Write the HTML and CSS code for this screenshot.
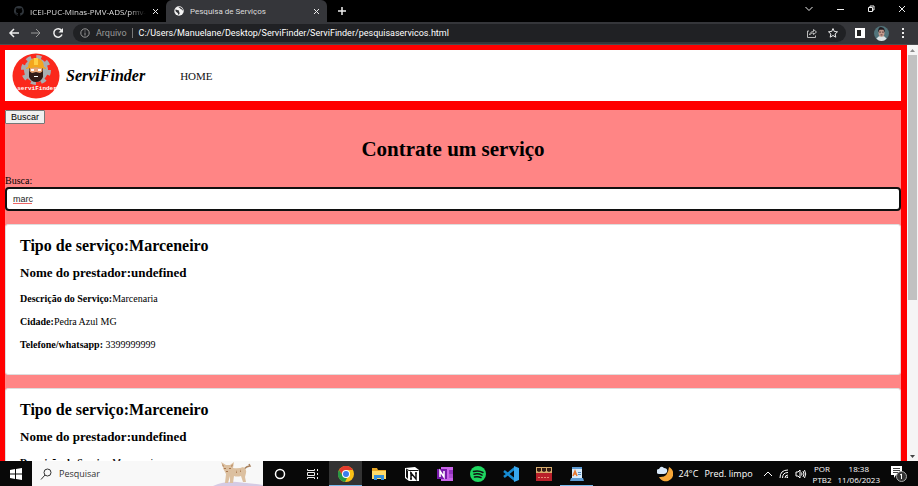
FILE: index.html
```html
<!DOCTYPE html>
<html lang="pt-BR">
<head>
<meta charset="utf-8">
<title>Pesquisa de Serviços</title>
<link rel="stylesheet" href="styles.css">
</head>
<body>
<header class="tabs">
  <div class="tab">
    <svg class="i10" viewBox="0 0 16 16"><path fill="#30363c" d="M8 0a8 8 0 0 0-2.5 15.600c.4.1.5-.2.5-.4v-1.500c-2.200.5-2.700-1-2.700-1-.4-.9-.9-1.100-.9-1.100-.7-.5.1-.5.1-.5.8.1 1.200.8 1.200.8.7 1.300 1.900.9 2.400.7 0-.5.3-.9.5-1.100-1.800-.2-3.600-.9-3.600-4 0-.9.3-1.600.8-2.100-.1-.2-.4-1 .1-2.100 0 0 .7-.2 2.200.8a7.500 7.500 0 0 1 4 0c1.500-1 2.200-.8 2.200-.8.4 1.100.2 1.900.1 2.100.5.600.8 1.300.8 2.100 0 3.100-1.900 3.700-3.700 3.900.3.300.6.800.6 1.500v2.200c0 .2.100.5.5.4A8 8 0 0 0 8 0"/></svg>
    <span class="tab-name fade">ICEI-PUC-Minas-PMV-ADS/pmv-ads</span>
    <button class="plain" aria-label="Fechar guia"><svg class="i7" viewBox="0 0 7 7"><path class="line" d="M1 1l5 5M6 1L1 6"/></svg></button>
  </div>
  <div class="tab active">
    <svg class="i10" viewBox="0 0 20 20"><circle cx="10" cy="10" r="9.500" fill="#f4f4f4"/><path fill="#35363a" d="M3 7c3 0 4 2 7 2 1 2-1 3 1 4 1 2-1 4-2 5-1-2-1-4-3-5S2 9 3 7M9 2c1 2 3 1 3 3 1 1 3 0 4 3 1 1 2 1 2 0-1-4-5-7-9-6"/></svg>
    <span class="tab-name">Pesquisa de Serviços</span>
    <button class="plain" aria-label="Fechar guia"><svg class="i7" viewBox="0 0 7 7"><path class="line" d="M1 1l5 5M6 1L1 6"/></svg></button>
  </div>
  <button class="plain new-tab" aria-label="Nova guia"><svg class="i10" viewBox="0 0 10 10"><path class="line bold" d="M5 1v8M1 5h8"/></svg></button>
  <div class="window-buttons">
    <button class="plain" aria-label="Pesquisar guias"><svg class="i10" viewBox="0 0 10 10"><path class="line" d="M1.500 3L5 6.500 8.500 3"/></svg></button>
    <button class="plain" aria-label="Minimizar"><svg class="i10" viewBox="0 0 10 10"><path class="line" d="M2 5.500h7"/></svg></button>
    <button class="plain" aria-label="Restaurar"><svg class="i10" viewBox="0 0 10 10"><path class="line" d="M2.500 3.500h4v4h-4zM4 3.500v-1.500h4v4H6.500"/></svg></button>
    <button class="plain" aria-label="Fechar"><svg class="i10" viewBox="0 0 10 10"><path class="line" d="M2 2l6 6M8 2L2 8"/></svg></button>
  </div>
</header>
<nav class="toolbar" aria-label="Navegador">
  <div class="nav-buttons">
    <button class="plain" aria-label="Voltar"><svg class="i12" viewBox="0 0 12 12"><path class="line bold" d="M11 6H2M6 2L2 6l4 4"/></svg></button>
    <button class="plain dim" aria-label="Avançar"><svg class="i12" viewBox="0 0 12 12"><path class="line" d="M1 6h9M6 2l4 4-4 4"/></svg></button>
    <button class="plain" aria-label="Recarregar"><svg class="i12" viewBox="0 0 12 12"><path class="line bold" d="M9.500 3.500A4.200 4.200 0 1 0 10 7.500"/><path fill="currentColor" d="M11 1v4.500H6.500z"/></svg></button>
  </div>
  <div class="address">
    <svg class="i10 dim" viewBox="0 0 10 10"><circle class="line" cx="5" cy="5" r="4.200"/><path class="line" d="M5 4.500v3M5 2.500v1"/></svg>
    <span class="scheme">Arquivo</span>
    <span class="url">C:/Users/Manuelane/Desktop/ServiFinder/ServiFinder/pesquisaservicos.html</span>
    <button class="plain soft" aria-label="Compartilhar"><svg class="i12" viewBox="0 0 12 12"><path class="line" d="M3 4H1.500v6.500h8V8.500M3.500 8c.5-2.500 2-3.500 4-3.500V2.500l3 2.500-3 2.500V6c-2 0-3 .5-4 2"/></svg></button>
    <button class="plain" aria-label="Favoritar"><svg class="i12" viewBox="0 0 12 12"><path class="line" d="M6 1.500l1.300 3 3.200.3L8.100 7l.7 3.200L6 8.500l-2.800 1.700L3.900 7 1.500 4.800l3.200-.3z"/></svg></button>
  </div>
  <button class="plain" aria-label="Painel lateral"><svg class="i10" viewBox="0 0 10 10"><path fill="#fff" d="M0 0h10v10H0z"/><path fill="#222" d="M2 2h4v6H2z"/></svg></button>
  <button class="plain avatar" aria-label="Perfil"><svg viewBox="0 0 16 16"><circle cx="8" cy="8" r="8" fill="#52747b"/><path fill="#dce3e5" d="M2.500 13.500q2-3 5.500-3t5.500 3Q11 16 8 16t-5.500-2.500"/><ellipse cx="8" cy="7" rx="3.200" ry="4.600" fill="#c59a8c"/><path fill="#221d22" d="M4.500 7Q4 1 8 1.200T11.500 7L10 4H6z"/><path stroke="#53383a" d="M5.500 6.500h2M8.500 6.500h2M7 9.500h2"/></svg></button>
  <button class="plain" aria-label="Menu"><svg class="i10" viewBox="0 0 10 10"><path fill="#eee" d="M4 0h2v2H4zM4 4h2v2H4zM4 8h2v2H4z"/></svg></button>
</nav>
<div class="viewport">
  <div class="site">
    <header class="site-header">
      <svg class="logo" viewBox="0 0 48 46">
        <ellipse cx="24" cy="23" rx="23.500" ry="22.500" fill="#fb281c"/>
        <circle cx="24" cy="17" r="12" fill="#a9adb1"/>
        <circle cx="24" cy="17" r="13" fill="none" stroke="#a9adb1" stroke-width="4" stroke-dasharray="5 5.200"/>
        <path fill="#7d4c2c" d="M17 15h14v9H17z"/><path fill="#e7a577" d="M18 15h12v6H18z"/>
        <path fill="#321b17" d="M17 18l3 2 4-1 4 1 3-2v6q-2 5-7 5t-7-5z"/>
        <path fill="#fff" d="M19 16h3v2h-3zM26 16h3v2h-3zM22 23h4v1h-4z"/>
        <path fill="#f4a51d" d="M16 14q0-8 8-9 8 1 8 9l2 1v1q-10-3-20 0v-1z"/>
        <path fill="#ffce43" d="M22 5h4v7h-4z"/>
        <text class="logo-text" x="25" y="37" text-anchor="middle">serviFinder</text>
      </svg>
      <span class="brand">ServiFinder</span>
      <a class="home" href="#">HOME</a>
    </header>
    <main class="content">
      <button class="search-button">Buscar</button>
      <h1>Contrate um serviço</h1>
      <label for="busca">Busca:</label>
      <div class="field"><input id="busca" type="text" value="marc"><svg class="squiggle" viewBox="0 0 20 3"><path d="M0 2l1-1 1 1 1-1 1 1 1-1 1 1 1-1 1 1 1-1 1 1 1-1 1 1 1-1 1 1 1-1 1 1 1-1 1 1 1-1"/></svg></div>
      <article class="card">
        <h2>Tipo de serviço:Marceneiro</h2>
        <h3>Nome do prestador:undefined</h3>
        <p><b>Descrição do Serviço:</b>Marcenaria</p>
        <p><b>Cidade:</b>Pedra Azul MG</p>
        <p><b>Telefone/whatsapp:</b> 3399999999</p>
      </article>
      <article class="card">
        <h2>Tipo de serviço:Marceneiro</h2>
        <h3>Nome do prestador:undefined</h3>
        <p><b>Descrição do Serviço:</b>Marcenaria</p>
      </article>
    </main>
  </div>
  <div class="scrollbar">
    <svg viewBox="0 0 11 10"><path fill="#8b8b8b" d="M3 7l2.500-3L8 7z"/></svg>
    <div class="thumb"></div>
    <svg class="down" viewBox="0 0 11 10"><path fill="#444" d="M3 4l2.500 3L8 4z"/></svg>
  </div>
</div>
<footer class="taskbar">
  <button class="plain start" aria-label="Iniciar"><svg class="i12" viewBox="0 0 12 12"><path fill="#fff" d="M0 2l5-1v4.500H0zM6 1l6-1v5.500H6zM0 6.500h5V11l-5-1zM6 6.500h6V12l-6-1z"/></svg></button>
  <div class="task-search">
    <svg class="i12" viewBox="0 0 12 12"><circle cx="7.500" cy="4.500" r="3.500" fill="none" stroke="#333"/><path stroke="#333" d="M5 7l-4 4.500"/></svg>
    <span>Pesquisar</span>
    <svg class="cat" viewBox="0 0 50 25"><path fill="#d5cbe4" d="M0 25q12-5 24-4t26 3v1z"/><path fill="none" stroke="#a9825f" stroke-width="1.500" d="M31 8q3-3 6-3l-1-2"/><path fill="#dcc0a0" d="M10 6L8 1l5 3h4l4-3-1 6q6 1 10-1 4 2 3 6l-1 4 1 5h-3l-2-6q-4 1-7 0l-1 7h-3v-7l-2 7h-3l1-9-2-4q-2-2 0-4"/><path fill="#a9774f" d="M9 3l2 2-1 1zM20 3l-2 2 1 1zM11 7h2v1h-2zM16 7h2v1h-2zM13 10h2v1h-2zM23 9l1 3h-1zM27 8l1 3h-1z"/></svg>
  </div>
  <div class="apps">
    <button class="plain" aria-label="Cortana"><svg class="i12" viewBox="0 0 12 12"><circle cx="6" cy="6" r="4.500" fill="none" stroke="#fff" stroke-width="1.500"/></svg></button>
    <button class="plain" aria-label="Visão de tarefas"><svg class="i12" viewBox="0 0 12 12"><path class="line" d="M.5 1v1.500h7V1M.5 11V9.500h7V11M.5 4.500h7v3h-7zM10.500 1v2M10.500 5v2M10.500 9v2"/></svg></button>
    <button class="plain current" aria-label="Chrome"><svg class="i16" viewBox="0 0 16 16"><circle cx="8" cy="8" r="8" fill="#fbc116"/><path fill="#e33b2e" d="M1 4a8 8 0 0 1 14 0H8L5 10z"/><path fill="#279847" d="M1 4l4 6 4 2-2 4A8 8 0 0 1 1 4"/><circle cx="8" cy="8" r="4" fill="#fff"/><circle cx="8" cy="8" r="3" fill="#3b7ded"/></svg></button>
    <button class="plain" aria-label="Explorador"><svg class="i16" viewBox="0 0 16 16"><path fill="#e9a825" d="M1 2h5l1 2h8v9H1z"/><path fill="#ffdb68" d="M1 5h14v8H1z"/><path fill="#3690d9" d="M3 9h10v5h-3v-2H6v2H3z"/></svg></button>
    <button class="plain" aria-label="Notion"><svg class="i16" viewBox="0 0 16 16"><path fill="#fff" d="M1 2l10-1 4 3v11H5l-4-3z"/><path fill="#111" d="M2 3l2 2v8l-2-2z"/><path fill="none" stroke="#111" d="M2 3l3 1.500h9.500"/><path fill="none" stroke="#111" stroke-width="1.500" d="M7 13V7l5 6V7M6 7h2M6 13h2M11 7h2"/></svg></button>
    <button class="plain" aria-label="OneNote"><svg class="i16" viewBox="0 0 16 16"><path fill="#ca64ea" d="M4 1h12v14H4z"/><path fill="#9332bf" d="M12 4h4v4h-4z"/><path fill="#ae4bd5" d="M12 8h4v4h-4z"/><path fill="#7719aa" d="M0 3h10v10H0z"/><path fill="none" stroke="#fff" stroke-width="1.500" d="M3 11V5l4 6V5"/></svg></button>
    <button class="plain" aria-label="Spotify"><svg class="i16" viewBox="0 0 16 16"><circle cx="8" cy="8" r="8" fill="#1ed760"/><path fill="none" stroke="#111" stroke-width="1.500" stroke-linecap="round" d="M3.500 5.500q5-1.500 9.500 1M4 8.300q4-1.300 8 .9M4.500 11q3.500-1 6.500.7"/></svg></button>
    <button class="plain" aria-label="VS Code"><svg class="i16" viewBox="0 0 16 16"><path fill="none" stroke="#168bd2" stroke-width="2.500" d="M1 5l11 9M1 11l11-9"/><path fill="#38a8ef" d="M11 0l5 2v12l-5 2z"/></svg></button>
    <button class="plain" aria-label="Jogo"><svg class="i16" viewBox="0 0 16 16"><path fill="#b9202a" d="M0 1h16v14H0z"/><path fill="#d8ad6e" d="M0 1h16v6H0z"/><path fill="#321913" d="M1 2h4v3L3 6 1 5zM6 2h4v3L8 6 6 5zM11 2h4v3l-2 1-2-1z"/><path stroke="#e98873" stroke-dasharray="2 1" d="M2 11.500h12"/></svg></button>
    <button class="plain open" aria-label="WordPad"><svg class="i16" viewBox="0 0 16 16"><path fill="#d7eafa" d="M3 1h10v11H3z"/><path fill="#5e9bd3" d="M3 1h10v2H3zM2 12h12l1 3H1z"/><path fill="none" stroke="#e87831" stroke-width="1.500" d="M4 10l2-5 2 5M5 8h2"/><path stroke="#548bc2" d="M9 6.500h3M9 8.500h3"/></svg></button>
  </div>
  <div class="tray">
    <svg class="i16" viewBox="0 0 16 16"><path fill="#f6a638" d="M12 1a7.500 7.500 0 1 1-10 10q9 1 10-10"/><path fill="#d9e9fa" d="M2 8a2.500 2.500 0 0 1 0-5q2-4 5-1 4 0 3 4-1 2-3 2z"/></svg>
    <span class="weather"><span>24°C</span><span>Pred. limpo</span></span>
    <svg class="i10" viewBox="0 0 10 10"><path class="line" d="M1 7l4-4 4 4"/></svg>
    <svg class="i10" viewBox="0 0 10 10"><path class="line" d="M1 9Q1 1 9 1M3.500 9q0-5.500 5.500-5.500M6 9q0-3 3-3"/><path fill="#fff" d="M7.500 7.500H9V9H7.500z"/></svg>
    <svg class="i12" viewBox="0 0 12 12"><path class="line" d="M1 4h2l2-2v8L3 8H1zM6.500 4.500q1 1.500 0 3M8 3q2 3 0 6M9.500 2q2.500 4 0 8"/></svg>
    <span class="stack language"><span>POR</span><span>PTB2</span></span>
    <span class="stack clock"><span>18:38</span><span>11/06/2023</span></span>
    <svg class="notice" viewBox="0 0 18 18"><path fill="#fff" d="M1 1h11v9H6l-2 3v-3H1z"/><path stroke="#444" d="M3 3.500h7M3 5.500h7M3 7.500h7"/><circle cx="11.500" cy="11.500" r="5" fill="#333" stroke="#aaa"/><path fill="none" stroke="#fff" d="M10 10l1.500-1v5"/></svg>
  </div>
</footer>
</body>
</html>
```
FILE: styles.css
```css
* { box-sizing: border-box; }
body {
  margin: 0;
  height: 100vh;
  display: flex;
  flex-direction: column;
  overflow: hidden;
  background: #000;
  color: #fff;
  font-family: "Open Sans", "Noto Sans", sans-serif;
  font-size: 8px;
}
svg { display: block; flex: none; }
button, input { font: inherit; }
.plain {
  display: flex;
  align-items: center;
  justify-content: center;
  padding: 0;
  border: 0;
  background: none;
  color: #eee;
}
.dim { color: #999; }
.soft { color: #bbb; }
.line { fill: none; stroke: currentColor; }
.bold { stroke-width: 1.5; }
.i7 { width: 7px; height: 7px; }
.i10 { width: 10px; height: 10px; }
.i12 { width: 12px; height: 12px; }
.i16 { width: 16px; height: 16px; }

.tabs { display: flex; flex: none; height: 22px; }
.tab {
  display: flex;
  align-items: center;
  gap: 6px;
  width: 166px;
  padding: 0 7px 0 14px;
}
.tab.active {
  width: 161px;
  padding: 0 7px 0 8px;
  border-radius: 6px 6px 0 0;
  background: #35363a;
}
.tab-name { flex: 1; overflow: hidden; white-space: nowrap; color: #ddd; }
.active .tab-name { font-family: Roboto, sans-serif; }
.fade { mask-image: linear-gradient(90deg, #000 85%, transparent); }
.new-tab { width: 30px; }
.window-buttons { display: flex; margin-left: auto; padding-right: 1px; }
.window-buttons .plain { width: 31px; height: 18px; }

.toolbar {
  display: flex;
  flex: none;
  align-items: center;
  gap: 9px;
  height: 23px;
  padding: 0 10px 0 8px;
  border-bottom: 1px solid #4b4d50;
  background: #35363a;
}
.nav-buttons { display: flex; gap: 10px; }
.address {
  display: flex;
  flex: 1;
  align-items: center;
  gap: 9px;
  height: 18px;
  padding: 0 7px;
  border-radius: 9px;
  background: #202124;
  font-family: Roboto, sans-serif;
  font-size: 9px;
}
.scheme { margin-left: -3px; padding-right: 5px; border-right: 1px solid #777; line-height: 10px; color: #999; }
.url { flex: 1; margin-left: -3px; white-space: nowrap; }
.avatar svg { width: 15px; height: 15px; }
.toolbar > .plain { flex: none; }
.address .plain { flex: none; }

.viewport { display: flex; flex: 1; min-height: 0; font-family: "Liberation Serif", serif; font-size: 10px; }
.site {
  flex: 1;
  overflow: hidden;
  padding: 5px 6px 0 5px;
  background: #f00;
  color: #000;
}
.site-header { display: flex; align-items: center; height: 51px; padding-left: 7px; background: #fff; }
.logo { width: 48px; height: 46px; }
.logo-text { font: bold 6px "Liberation Mono", monospace; fill: #fff; }
.brand { margin-left: 6px; font-size: 16px; font-weight: bold; font-style: italic; }
.home { margin-left: 35px; color: #111; font-size: 11px; text-decoration: none; }
.content { margin-top: 9px; background: #ff8585; }
.search-button {
  display: block;
  height: 14px;
  padding: 0 5px;
  border: 1px solid #777;
  border-radius: 1px;
  background: #f0f0f0;
  color: #000;
  font: 9px/12px "Liberation Sans", sans-serif;
}
h1 { margin: 13px 0; font-size: 21px; line-height: 24px; text-align: center; }
label { display: block; line-height: 13px; }
.field { position: relative; }
.field input {
  display: block;
  width: 100%;
  height: 24px;
  padding: 0 6px;
  border: 2px solid #101010;
  border-radius: 4px;
  outline: none;
  background: #fff;
  color: #222;
  font: 9px "Liberation Sans", sans-serif;
}
.squiggle { position: absolute; left: 8px; bottom: 6px; width: 20px; height: 3px; }
.squiggle path { fill: none; stroke: #e66; stroke-width: 1; }
.card {
  margin-top: 13px;
  padding: 12px 14px 12px;
  border: 1px solid #ddd;
  border-radius: 3px;
  background: #fff;
}
h2 { margin: 0 0 11px; font-size: 16px; line-height: 18px; }
h3 { margin: 0 0 13px; font-size: 13px; line-height: 14px; }
p { margin: 0 0 11px; line-height: 12px; }
.scrollbar { display: flex; flex: none; flex-direction: column; width: 11px; background: #f5f5f5; }
.scrollbar svg { width: 11px; height: 10px; }
.thumb { height: 59%; margin: 0 1px; background: #c1c1c1; }
.down { margin-top: auto; }

.taskbar { display: flex; flex: none; height: 25px; background: #080808; }
.start { width: 32px; }
.task-search { display: flex; align-items: center; gap: 7px; width: 231px; padding-left: 8px; background: #f8f8f8; color: #333; font-size: 9px; }
.cat { width: 50px; height: 25px; margin-left: auto; }
.apps { display: flex; }
.apps .plain { width: 33px; border: solid transparent; border-width: 1px 0; }
.apps .current { border-bottom-color: #76b9ed; background: #333; }
.apps .open { border-bottom-color: #76b9ed; }
.tray { display: flex; align-items: center; gap: 6px; margin-left: auto; padding-right: 10px; font-size: 9px; }
.weather { display: flex; gap: 6px; margin-right: 4px; white-space: nowrap; }
.stack { display: flex; flex-direction: column; align-items: center; font-size: 8px; line-height: 11px; }
.notice { width: 18px; height: 18px; margin-left: 4px; }
```
